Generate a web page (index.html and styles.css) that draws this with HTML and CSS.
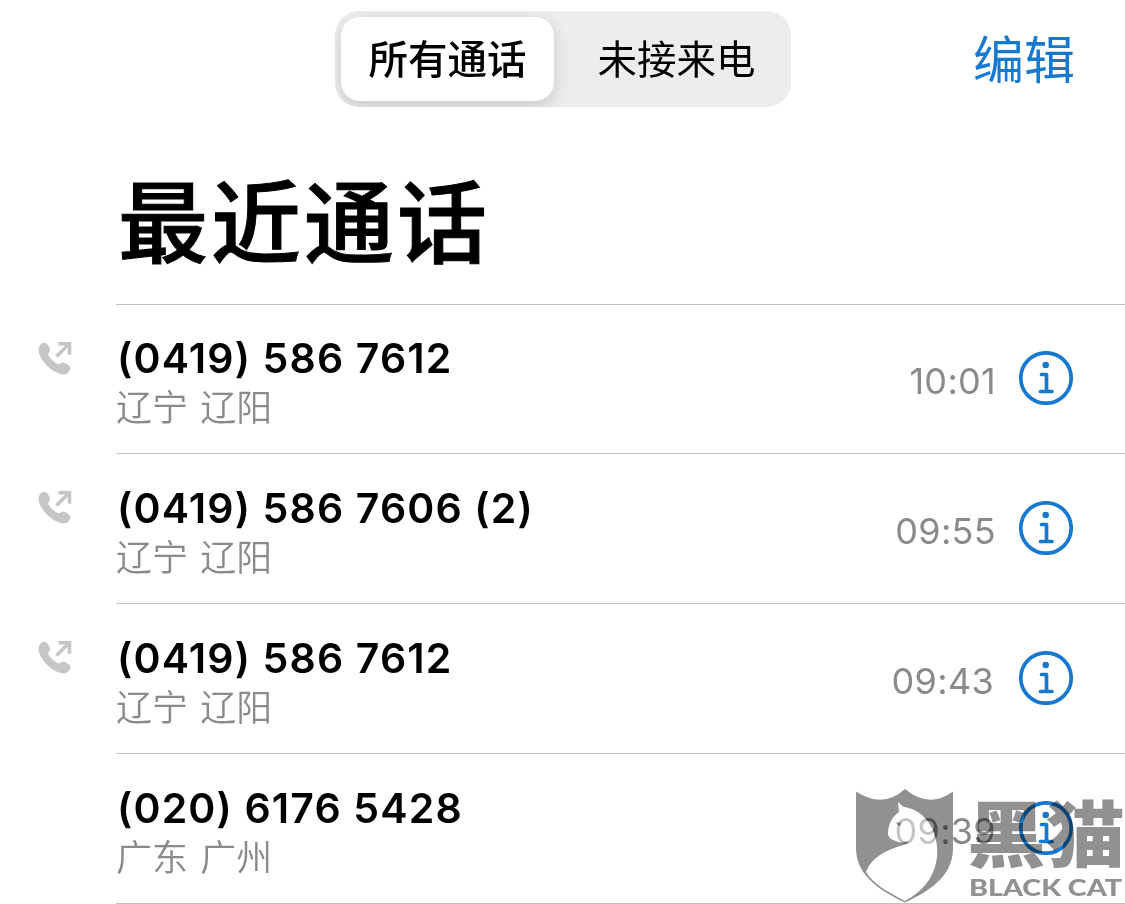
FILE: index.html
```html
<!DOCTYPE html>
<html lang="zh-CN">

<head>
    <meta charset="UTF-8">
    <meta name="viewport" content="width=device-width, initial-scale=1.0">
    <title>最近通话</title>
    <link rel="stylesheet" href="styles.css">
</head>

<body>

    <!-- Shared icons -->
    <svg class="sprite" aria-hidden="true">
        <symbol id="icon-outgoing" viewBox="0 0 34 34">
            <path d="M.8 6C1.500 2.500 4.500.6 6.500.8c2.500.3 5 4.500 5.500 6.700.4 2.300-2 3.300-1.700 5 .6 3 6.700 9 10 9.700 1.800.4 2.900-1.900 4.900-1.800 2.300.1 6.800 3.200 7.300 5.300.5 2.300-2.500 6-5.300 6.600C17 34-1.500 17 .8 6z"/>
            <path class="arrow" d="M18.500 14.500 31 2M20.500 1.800h11v11"/>
        </symbol>
        <symbol id="icon-info" viewBox="0 0 54 54">
            <circle class="line" cx="27" cy="27" r="25.200"/>
            <circle cx="26.700" cy="14" r="3.300"/>
            <path class="line" stroke-linecap="round" stroke-linejoin="round" d="M22.500 23.500h5v17M21.500 40.500h11.500"/>
        </symbol>
    </svg>

    <!-- Top bar -->
    <header>
        <div class="tabs">
            <button class="tab active">所有通话</button>
            <button class="tab">未接来电</button>
        </div>
        <a class="edit">编辑</a>
    </header>

    <h1>最近通话</h1>

    <!-- Call list -->
    <ul class="calls">
        <li class="call">
            <svg class="outgoing"><use href="#icon-outgoing"/></svg>
            <div class="caller">
                <p class="number">(0419) 586 7612</p>
                <p class="place">辽宁 辽阳</p>
            </div>
            <span class="time">10:01</span>
            <svg class="info"><use href="#icon-info"/></svg>
        </li>
        <li class="call">
            <svg class="outgoing"><use href="#icon-outgoing"/></svg>
            <div class="caller">
                <p class="number">(0419) 586 7606 (2)</p>
                <p class="place">辽宁 辽阳</p>
            </div>
            <span class="time">09:55</span>
            <svg class="info"><use href="#icon-info"/></svg>
        </li>
        <li class="call">
            <svg class="outgoing"><use href="#icon-outgoing"/></svg>
            <div class="caller">
                <p class="number">(0419) 586 7612</p>
                <p class="place">辽宁 辽阳</p>
            </div>
            <span class="time nudge">09:43</span>
            <svg class="info"><use href="#icon-info"/></svg>
        </li>
        <li class="call">
            <div class="caller">
                <p class="number">(020) 6176 5428</p>
                <p class="place">广东 广州</p>
            </div>
            <span class="time">09:39</span>
            <svg class="info"><use href="#icon-info"/></svg>
        </li>
    </ul>

    <!-- Watermark -->
    <svg class="watermark cat-layer" viewBox="0 0 280 129">
        <path class="cat" d="M53 27l5 4.500 9 2.500c12 5 21 16 24 31 5 24-5 47-31 61C42 117 27 109 20 97c5-14 19-21 31-25 7-2 10-3 12-5-5 1-10 1-13-1-5-1-9-5-8-9 1-8 3-14 11-20z"/>
    </svg>
    <svg class="watermark" viewBox="0 0 280 129">
        <path class="shield" fill-rule="evenodd" d="M11 16.500Q38 34 60 14q24 20 48 2.500V73c0 26-19 41-48 54.500C31 114 11 98 11 73zM53 27l1 10c-8 6-10 12-11 20-1 4 3 8 8 9 3 2 8 2 13 1-2 2-5 3-12 5-12 4-26 11-31 25 7 12 22 20 39 29 26-14 36-37 31-61-3-15-12-26-24-31l-9-2.500z"/>
        <path class="eye" d="M51 47c3 1 4 1 5-1l-1 5c-2 0-3-2-4-4z"/>
        <text class="brand" x="122" y="86" textLength="158" lengthAdjust="spacingAndGlyphs">黑猫</text>
        <text class="brand-en" x="124" y="121" textLength="153" lengthAdjust="spacingAndGlyphs">BLACK CAT</text>
    </svg>

</body>

</html>
```
FILE: styles.css
```css
/* General Reset */
* {
    margin: 0;
    padding: 0;
    box-sizing: border-box;
}

/* Body Styles */
body {
    position: relative;
    height: 904px;
    overflow: hidden;
    font-family: Inter, "Noto Sans CJK SC", sans-serif;
    background: #fff;
    color: #000;
}

.sprite {
    display: none;
}

/* Top bar */
header {
    display: flex;
    justify-content: space-between;
    padding: 11px 50px 0 335px;
}

.tabs {
    display: flex;
    width: 456px;
    height: 96px;
    padding: 6px;
    border-radius: 24px;
    background: #ededed;
    overflow: hidden;
}

.tab {
    flex: 1;
    padding: 0 0 5px 14px;
    border: 0;
    border-radius: 19px;
    background: none;
    font-family: "Noto Sans CJK SC", sans-serif;
    font-size: 39.500px;
    color: #000;
}

.tab.active {
    flex: 0 0 213px;
    padding-left: 0;
    background: #fff;
    font-weight: 500;
    box-shadow: 0 5px 16px rgba(0, 0, 0, 0.16);
}

.edit {
    font-size: 51px;
    line-height: 74px;
    margin-top: 13px;
    color: #1579d0;
}

h1 {
    height: 197px;
    padding: 50px 0 0 118px;
    font-size: 90px;
    line-height: 134px;
    font-weight: 500;
    letter-spacing: 3px;
    -webkit-text-stroke: 1px #000;
}

/* Call list */
.calls {
    margin-left: 116px;
    border-top: 1px solid #c2c2c4;
    list-style: none;
}

.call {
    position: relative;
    display: flex;
    height: 150px;
    padding: 33px 52px 0 0;
    border-bottom: 1px solid #c2c2c4;
}

.call:first-child {
    height: 149px;
    padding-top: 32px;
}

/* The call icon hangs in the margin left of the list */
.outgoing {
    position: absolute;
    left: -78px;
    top: 37px;
    width: 34px;
    height: 34px;
    fill: #c6c6c6;
}

.arrow {
    fill: none;
    stroke: #c6c6c6;
    stroke-width: 3.500;
}

.caller {
    flex: 1;
}

.number {
    padding-left: 1px;
    font-size: 41px;
    line-height: 42px;
    font-weight: 600;
    letter-spacing: 1.150px;
}

.place {
    padding-top: 2px;
    font-size: 36px;
    line-height: 54px;
    font-weight: 350;
    word-spacing: 2px;
    color: #8a8a8c;
}

.time {
    margin-right: 23px;
    font-size: 36px;
    line-height: 88px;
    letter-spacing: 0.300px;
    color: #8a8a8e;
}

.time.nudge {
    margin-right: 25px;
}

.info {
    width: 54px;
    height: 54px;
    margin-top: 14px;
    fill: #1579d0;
}

.line {
    fill: none;
    stroke: #1579d0;
    stroke-width: 3.700;
}

/* Watermark */
.watermark {
    position: absolute;
    left: 845px;
    top: 775px;
    width: 280px;
    height: 129px;
    mix-blend-mode: multiply;
}

.watermark.cat-layer {
    mix-blend-mode: normal;
}

.shield,
.brand,
.brand-en,
.eye {
    fill: #929090;
}

.cat {
    fill: rgba(255, 255, 255, 0.5);
}

.brand {
    font-family: "Noto Sans CJK SC", sans-serif;
    font-size: 72px;
    font-weight: 900;
}

.brand-en {
    font-family: Lato, sans-serif;
    font-size: 23.500px;
    font-weight: 900;
}
```
